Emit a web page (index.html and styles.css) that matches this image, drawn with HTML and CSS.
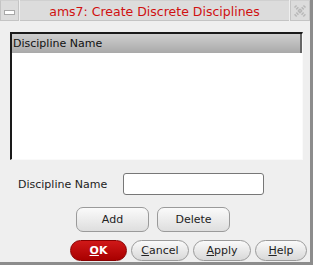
FILE: index.html
```html
<!DOCTYPE html>
<html lang="en">
<head>
    <meta charset="UTF-8">
    <title>ams7: Create Discrete Disciplines</title>
    <link rel="stylesheet" href="styles.css">
</head>
<body>
<div class="window">
    <div class="titlebar">
        <div class="tb-button">
            <span class="min-bar"></span>
        </div>
        <div class="tb-title">ams7: Create Discrete Disciplines</div>
        <div class="tb-button close">
            <svg width="14" height="14" viewBox="0 0 14 14">
                <path d="M2 2 L12 12 M12 2 L2 12" stroke="#b8b8b8" stroke-width="3" stroke-dasharray="1.5 1"/>
            </svg>
        </div>
    </div>

    <div class="content">
        <div class="list">
            <div class="list-header">Discipline Name</div>
            <div class="list-body"></div>
        </div>

        <div class="field-row">
            <label class="field-label">Discipline Name</label>
            <input class="field-input" type="text">
        </div>

        <div class="action-row">
            <button class="btn">Add</button>
            <button class="btn">Delete</button>
        </div>

        <div class="dialog-row">
            <button class="pill ok"><u>O</u>K</button>
            <button class="pill"><u>C</u>ancel</button>
            <button class="pill"><u>A</u>pply</button>
            <button class="pill help"><u>H</u>elp</button>
        </div>
    </div>
</div>
</body>
</html>
```

FILE: styles.css
```css
body, html {
    margin: 0;
    padding: 0;
    background: #efefef;
    font-family: "DejaVu Sans", sans-serif;
}

.window {
    width: 310px;
    height: 262px;
    border-right: 3px solid #8c8c8c;
    border-bottom: 3px solid #8c8c8c;
    display: flex;
    flex-direction: column;
}

.titlebar {
    height: 20px;
    display: flex;
    background: #efefef;
}

.tb-button {
    width: 17px;
    height: 19px;
    background: #dcdcdc;
    border: 1px solid #c4c4c4;
    border-top-color: #d0d0d0;
    display: flex;
    align-items: center;
    justify-content: center;
}

.min-bar {
    width: 9px;
    height: 3px;
    background: #fff;
    border: 1px solid #a8a8a8;
    margin-top: 4px;
}

.tb-title {
    flex: 1;
    height: 19px;
    background: #dcdcdc;
    border: 1px solid #c4c4c4;
    border-top-color: #d0d0d0;
    border-left: none;
    border-right: none;
    margin: 0 1px;
    color: #d01010;
    font-size: 12.5px;
    line-height: 21px;
    text-align: center;
}

.close {
    width: 18px;
}

.content {
    flex: 1;
    display: flex;
    flex-direction: column;
    padding: 12px 0 0 10px;
}

.list {
    height: 125px;
    margin-right: 7px;
    border-top: 2px solid #1a1a1a;
    border-left: 2px solid #1a1a1a;
    border-right: 1px solid #fafafa;
    border-bottom: 1px solid #fafafa;
    display: flex;
    flex-direction: column;
    background: #fff;
}

.list-header {
    height: 19px;
    background: linear-gradient(#cfcfcf, #a9a9a9);
    border-right: 2px solid #666;
    font-size: 11px;
    line-height: 19px;
    padding-left: 1px;
    color: #111;
}

.list-body {
    flex: 1;
    background: #fff;
}

.field-row {
    display: flex;
    align-items: center;
    margin-top: 13px;
    padding-left: 8px;
}

.field-label {
    width: 105px;
    font-size: 11px;
    color: #222;
}

.field-input {
    width: 141px;
    height: 22px;
    box-sizing: border-box;
    border: 1px solid #777;
    border-radius: 3px;
    background: #fff;
    padding: 0;
    margin: 0;
}

.action-row {
    display: flex;
    gap: 8px;
    margin-top: 12px;
    padding-left: 66px;
}

.btn {
    width: 73px;
    height: 25px;
    border: 1px solid #9a9a9a;
    border-radius: 7px;
    background: linear-gradient(#fafafa, #dedede);
    font-family: "DejaVu Sans", sans-serif;
    font-size: 11px;
    color: #222;
    padding: 0;
}

.dialog-row {
    display: flex;
    gap: 4px;
    margin-top: 8px;
    padding-left: 60px;
}

.pill {
    flex-shrink: 0;
    width: 58px;
    height: 21px;
    border: 1px solid #9a9a9a;
    border-radius: 11px;
    background: linear-gradient(#fafafa, #d8d8d8);
    font-family: "DejaVu Sans", sans-serif;
    font-size: 11px;
    color: #222;
    padding: 0;
}

.pill.ok {
    width: 57px;
    background: linear-gradient(#d01818, #a80000);
    border-color: #880000;
    color: #fff;
    font-weight: bold;
}

.pill.help {
    width: 52px;
}
```
